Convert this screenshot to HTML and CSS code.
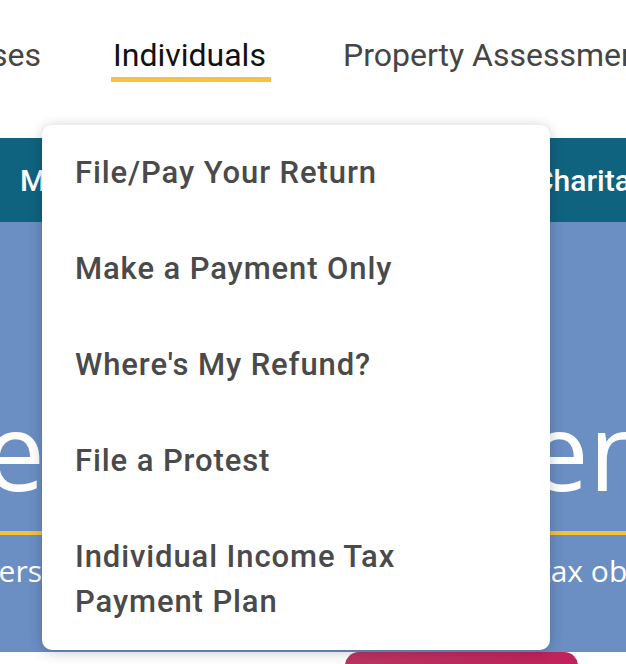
FILE: index.html
```html
<!DOCTYPE html>
<html lang="en">
<head>
<meta charset="utf-8">
<title>Individuals menu</title>
<link rel="stylesheet" href="styles.css">
</head>
<body>
<div class="page">
  <nav class="topnav">
    <div class="nav-item"><span class="nav-text">Businesses</span></div>
    <div class="nav-item active"><span class="nav-text">Individuals</span><span class="nav-bar"></span></div>
    <div class="nav-item"><span class="nav-text">Property Assessment</span></div>
  </nav>

  <div class="band">
    <div class="band-left">My Account</div>
    <div class="band-right">Charitable Giving</div>
  </div>

  <section class="hero">
    <div class="hero-title">
      <div class="clip clip-left">Welcome</div>
      <div class="title-gap"></div>
      <div class="clip clip-right">enue</div>
    </div>
    <div class="hero-rule"></div>
    <div class="hero-sub">
      <div class="clip clip-left-sub">taxpayers</div>
      <div class="sub-gap"></div>
      <div class="clip clip-right-sub">tax obligations</div>
    </div>
  </section>

  <div class="bottom">
    <div class="bottom-btn"></div>
  </div>

  <div class="dropdown">
    <a class="dd-item">File/Pay Your Return</a>
    <a class="dd-item">Make a Payment Only</a>
    <a class="dd-item">Where's My Refund?</a>
    <a class="dd-item">File a Protest</a>
    <a class="dd-item"><span class="dd-wrap">Individual Income Tax Payment Plan</span></a>
  </div>
</div>
</body>
</html>
```

FILE: styles.css
```css
html, body {
  margin: 0;
  padding: 0;
  background: #ffffff;
}

.page {
  position: relative;
  width: 626px;
  height: 664px;
  overflow: hidden;
  font-family: Roboto, "Liberation Sans", sans-serif;
}

/* top navigation */
.topnav {
  height: 138px;
  box-sizing: border-box;
  padding-top: 36px;
  display: flex;
  align-items: flex-start;
  gap: 72px;
  margin-left: -122px;
  white-space: nowrap;
}

.nav-item {
  display: flex;
  flex-direction: column;
  align-items: flex-start;
}

.nav-text {
  font-size: 32px;
  line-height: 38px;
  color: #454545;
  font-weight: 400;
}

.active .nav-text {
  color: #111111;
}

.nav-bar {
  display: block;
  width: 160px;
  height: 5px;
  margin-top: 3px;
  margin-left: -2px;
  background: #f6c244;
}

/* teal band */
.band {
  height: 84px;
  background: #10637f;
  display: flex;
  align-items: center;
  color: #ffffff;
  font-size: 30px;
  font-weight: 500;
  white-space: nowrap;
  overflow: hidden;
}

.band-left {
  flex: 0 0 534px;
  box-sizing: border-box;
  padding-left: 20px;
}

.band-right {
  flex: 0 0 auto;
}

/* hero */
.hero {
  height: 430px;
  box-sizing: border-box;
  padding-top: 163px;
  background: #6b8ec3;
  color: #ffffff;
  font-family: "Open Sans", "Liberation Sans", sans-serif;
  overflow: hidden;
}

.hero-title {
  display: flex;
  height: 130px;
  font-size: 108px;
  line-height: 130px;
  font-weight: 400;
}

.clip {
  overflow: hidden;
  white-space: nowrap;
  display: flex;
}

.clip-left {
  flex: 0 0 45px;
  justify-content: flex-end;
}

.title-gap {
  flex: 0 0 483px;
}

.clip-right {
  flex: 1 1 auto;
}

.hero-rule {
  height: 4px;
  margin-top: 16px;
  background: #f3c23a;
}

.hero-sub {
  display: flex;
  margin-top: 16px;
  font-size: 30px;
  line-height: 40px;
}

.clip-left-sub {
  flex: 0 0 42px;
  justify-content: flex-end;
}

.sub-gap {
  flex: 0 0 498px;
}

.clip-right-sub {
  flex: 1 1 auto;
}

/* bottom strip */
.bottom {
  height: 12px;
  background: #ffffff;
  display: flex;
  align-items: flex-start;
}

.bottom-btn {
  margin-left: 345px;
  width: 233px;
  height: 50px;
  border-radius: 14px 14px 0 0;
  background: linear-gradient(90deg, #bd3462, #c2215a);
}

/* dropdown overlay */
.dropdown {
  position: absolute;
  left: 42px;
  top: 125px;
  width: 508px;
  height: 525px;
  box-sizing: border-box;
  background: #ffffff;
  border-radius: 10px;
  box-shadow: 0 2px 14px rgba(0, 0, 0, 0.22);
  display: flex;
  flex-direction: column;
}

.dd-item {
  display: block;
  padding: 25px 33px 26px 33px;
  font-size: 31px;
  line-height: 45px;
  letter-spacing: 0.9px;
  font-weight: 500;
  color: #4a4a4a;
}

.dd-wrap {
  display: block;
  max-width: 380px;
}
```
